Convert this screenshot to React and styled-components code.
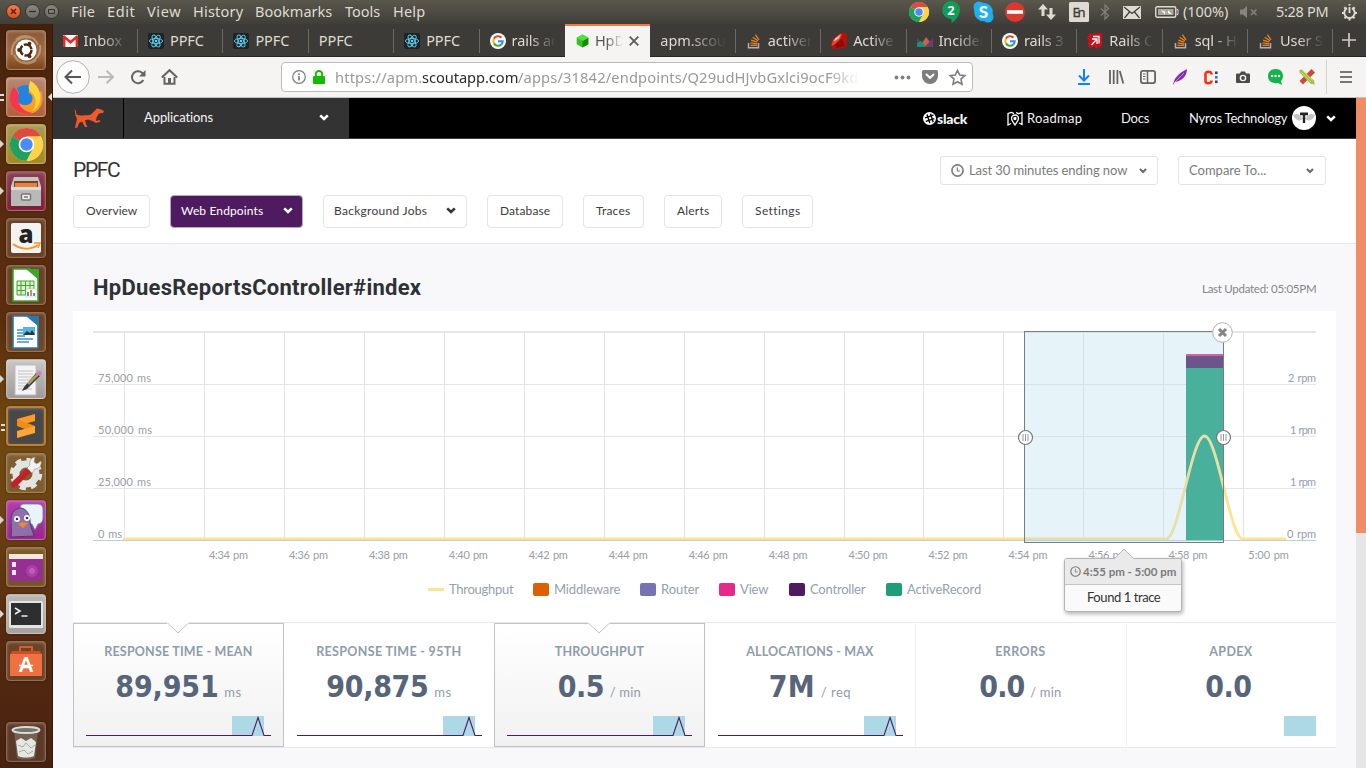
import React, { useLayoutEffect, useRef } from "react";
import styled, { createGlobalStyle } from "styled-components";

const Global = createGlobalStyle`
  * { box-sizing: border-box; }
  body { margin: 0; overflow: hidden; }
`;
const SYS = `"Noto Sans", "Open Sans", sans-serif`;
const WEB = `Lato, "Open Sans", sans-serif`;
const HEAD = `Roboto, "Open Sans", sans-serif`;

/* ---------- text that tracks itself to a given width ---------- */
const FitSpan = styled.span`
  display: block;
  flex: none;
  white-space: pre;
  width: ${(p) => p.$w}px;
  margin-left: ${(p) => p.$ml || 0}px;
  color: ${(p) => p.$c || "inherit"};
`;
function Fit({ w, ml, c, children }) {
  const ref = useRef(null);
  useLayoutEffect(() => {
    const el = ref.current;
    const range = document.createRange();
    el.style.letterSpacing = "0px";
    range.selectNodeContents(el);
    const natural = range.getBoundingClientRect().width;
    el.style.letterSpacing = (w + 0.3 - natural) / children.length + "px";
  }, [w, children]);
  return <FitSpan ref={ref} $w={w} $ml={ml} $c={c}>{children}</FitSpan>;
}

/* ---------- shell ---------- */
const Desktop = styled.div`
  width: 1366px; height: 768px; overflow: hidden;
  display: grid; grid-template-columns: 53px 1fr; grid-template-rows: 24px 1fr;
`;
const Icon = styled.svg`
  display: block; flex: none; overflow: visible;
  margin-left: ${(p) => p.$ml || 0}px;
`;
const MenuBar = styled.header`
  grid-column: 1 / 3;
  display: flex; align-items: center;
  background: linear-gradient(#5a574c, #3f3e39);
  color: #dfdbd2; font: 14.5px/22px ${SYS};
  & > span { padding-bottom: 2px; }
`;
const WinBtn = styled.b`
  width: 15px; height: 15px; border-radius: 50%; flex: none;
  margin-left: ${(p) => p.$ml}px; margin-top: -1px;
  background: ${(p) => (p.$close ? "linear-gradient(#f37b50,#e4501f)" : "linear-gradient(#8a877e,#6d6b64)")};
  border: 1px solid #37352f;
  display: grid; place-items: center;
`;

/* ---------- launcher ---------- */
const Launcher = styled.aside`
  background: linear-gradient(#42200c, #562a0e 12%, #5a2d0f 40%, #70480f 54%, #6c4412 65%, #552a10 82%, #482210);
  border-right: 1px solid #31180b;
  padding: 6px 0 0 6px;
  display: flex; flex-direction: column; gap: 7px;
`;
const Tile = styled.div`
  position: relative; flex: none;
  width: 40px; height: 40px; border-radius: 4px;
  background: ${(p) => p.$bg};
  border: ${(p) => (p.$edge ? `2px solid ${p.$edge}` : "1px solid rgba(255, 230, 200, 0.28)")};
  box-shadow: inset 0 1px 3px rgba(255,255,255,.25), 0 0 2px rgba(0,0,0,.5);
  margin-top: ${(p) => p.$mt || 0}px;
  display: grid; place-items: center;
`;
const Pip = styled.i`
  position: absolute; left: -7px; top: 15px;
  border: 4px solid transparent; border-left-color: #d9d5d0; border-right: 0;
`;
const Pips = styled.i`
  position: absolute; left: -7px; top: 16px; width: 4px; height: 7px;
  border-top: 2px solid #ddd; border-bottom: 2px solid #ddd;
`;
const ActivePip = styled.i`
  position: absolute; left: 41px; top: 15px;
  border: 4px solid transparent; border-right-color: #e4e0dc; border-left: 0;
`;

/* ---------- browser ---------- */
const Browser = styled.main`
  display: grid; grid-template-rows: 33px 41px 1fr; min-width: 0;
`;
const TabBar = styled.div`
  display: flex; background: #3c3b37; border-bottom: 1px solid #262521;
  color: #dfdbd2; font: 14.5px/33px ${SYS};
`;
const Tab = styled.div`
  position: relative; flex: none; width: 85.4px; height: 33px;
  margin-left: ${(p) => (p.$first ? -0.4 : 0)}px;
  padding-left: ${(p) => (p.$active ? 11 : 10)}px;
  padding-bottom: ${(p) => (p.$active ? 2 : 0)}px;
  display: flex; align-items: center; gap: 6px;
  background: ${(p) => (p.$active ? "#f5f4f2" : "none")};
  border-top: ${(p) => (p.$active ? "2px solid #f0794b" : "0")};
  color: ${(p) => (p.$active ? "#56544f" : "inherit")};
  &::after {
    content: ""; position: absolute; right: 0; top: 5px; width: 1px; height: 24px;
    background: ${(p) => (p.$plain ? "none" : "#6b6963")};
  }
`;
const TabText = styled.div`
  width: ${(p) => p.$w}px; overflow: hidden; white-space: nowrap;
  letter-spacing: -0.1px;
  mask-image: ${(p) => (p.$fade ? "linear-gradient(90deg,#000 40%,transparent)" : "none")};
`;
const ToolBar = styled.div`
  display: flex; align-items: center;
  background: #f5f4f3; border-bottom: 1px solid #c5c3c0; padding-left: 3px;
`;
const UrlBox = styled.div`
  width: 692px; height: 30px; margin-left: 103px; flex: none;
  display: flex; align-items: center;
  background: #fff; border: 1px solid #bdbbb8; border-radius: 4px;
  font: 14.7px/28px ${SYS};
`;
const Url = styled.div`
  display: flex; width: 524px; margin-left: 10px; overflow: hidden;
  mask-image: linear-gradient(90deg, #000 94%, transparent 100%);
`;
const Divider = styled.i`
  width: 1px; height: 34px; background: #d5d3d0; margin-left: 11px;
`;
const View = styled.div`
  display: grid; grid-template-columns: 1303px 10px; min-height: 0;
`;
const Track = styled.div`background: #e6e6e6;`;
const Thumb = styled.div`height: 435px; background: #f08d67;`;

/* ---------- page ---------- */
const Page = styled.div`background: #f8f8fb; font-family: ${WEB}; color: #333; min-width: 0;`;
const TopNav = styled.nav`
  display: flex; align-items: center; height: 41px;
  background: #000; border-bottom: 1px solid #3b3b3b;
  color: #f4f4f4; font-size: 13px; line-height: 39px;
`;
const Brand = styled.div`
  width: 70px; height: 40px; background: #333; display: grid; place-items: center;
`;
const AppPicker = styled.div`
  width: 225px; height: 40px; background: #333; margin-left: 1px;
  display: flex; align-items: center; padding: 0 0 1px 20px;
`;
const SlackName = styled.div`font-weight: 900; font-size: 14px;`;
const Avatar = styled.span`
  width: 24px; height: 24px; margin-left: 5px; border-radius: 50%; background: #fff; overflow: hidden;
  display: grid; place-items: center;
`;
const AppHead = styled.section`
  height: 105px; background: #fff; border-bottom: 1px solid #e7e7ea; padding: 17px 30px 0 20px;
`;
const HeadRow = styled.div`display: flex; height: 39px; align-items: flex-start;`;
const AppName = styled.h1`
  margin: 0; flex: 1; font: 400 21px/28px ${HEAD}; color: #333;
`;
const Select = styled.div`
  height: 29px; width: ${(p) => p.$w}px; margin-left: ${(p) => p.$ml || 0}px;
  border: 1px solid #e3e3e3; border-radius: 3px; padding: 0 10px;
  display: flex; align-items: center; color: #7b7b7b; font-size: 13px; line-height: 27px;
`;
const Buttons = styled.div`display: flex; gap: 20px;`;
const NavBtn = styled.div`
  height: 33px; width: ${(p) => p.$w}px; border-radius: 4px;
  margin-left: ${(p) => p.$ml || 0}px;
  border: 1px solid ${(p) => (p.$on ? "#b9a7c1" : "#e4e4e4")};
  background: ${(p) => (p.$on ? "#4f1b60" : "#fff")};
  color: ${(p) => (p.$on ? "#fff" : "#3b3b3b")};
  padding: 0 0 2px ${(p) => (p.$menu ? 10 : 12)}px;
  display: flex; align-items: center; font-size: 12px; line-height: 29px;
`;
const TitleRow = styled.div`
  display: flex; align-items: flex-start; height: 67px; padding: 28px 40px 0;
`;
const Title = styled.h2`margin: 0; flex: 1; font: 700 22px/31px ${HEAD}; color: #2f3235;`;
const Updated = styled.div`font-size: 11.5px; line-height: 34px; color: #858585;`;
const Panel = styled.div`position: relative; width: 1263px; margin-left: 20px; height: 437px; background: #fff; border-bottom: 1px solid #e8e8ee;`;
const ChartSvg = styled.svg`display: block; font: 11px ${WEB}; word-spacing: 1px;`;
const Legend = styled.div`
  display: flex; align-items: center; height: 20px; margin-top: 8px; padding-left: 355px;
  color: #95a0ae; font-size: 13px; line-height: 20px;
`;
const Swatch = styled.i`
  width: 16px; height: ${(p) => (p.$line ? 3 : 13)}px; border-radius: ${(p) => (p.$line ? 0 : 2)}px;
  background: ${(p) => p.$c}; margin: 0 5px 0 ${(p) => p.$ml || 0}px;
`;
const Tip = styled.div`
  position: absolute; left: 991px; top: 247px; width: 118px; height: 54px;
  border: 1px solid #b4b4b4; border-radius: 3px; background: #fafafa;
  box-shadow: 1px 2px 4px rgba(0,0,0,.3); color: #333; font-size: 13px; line-height: 25px;
`;
const TipHead = styled.div`
  display: flex; align-items: center; height: 26px; padding-left: 5px;
  background: #eaeaea; border-bottom: 1px solid #c6c6c6; border-radius: 2px 2px 0 0;
  color: #7b7b7b; font-weight: 700; font-size: 11.5px; line-height: 23px;
`;
const TipArrow = styled.svg`position: absolute; left: 48px; top: -11px;`;
const Stats = styled.div`
  display: grid; grid-template-columns: repeat(6, 1fr); height: 125px; margin-top: 23px;
  border-top: 1px solid #e8e8ee;
`;
const Card = styled.div`
  position: relative; height: 124px; min-width: 0;
  display: flex; flex-direction: column; align-items: center;
  border: 1px solid ${(p) => (p.$on ? "#c3c3c3" : "transparent")};
  border-left-color: ${(p) => (p.$on ? "#c3c3c3" : p.$div ? "#f0f0f4" : "transparent")};
  background: ${(p) => (p.$on ? "linear-gradient(#fff,#f1f1f1)" : "#fff")};
`;
const Notch = styled.svg`position: absolute; left: 93px; top: -2px;`;
const CardTitle = styled.div`
  margin-top: 18px; font-size: 12.5px; font-weight: 700; line-height: 20px; color: #8f9cab;
`;
const Value = styled.div`
  display: flex; align-items: baseline; height: 40px; margin-top: 5px;
  padding-right: ${(p) => p.$pr || 0}px;
  color: #56657a; font: 700 30px/40px "DejaVu Sans Condensed", "DejaVu Sans", sans-serif;
`;
const Unit = styled.div`font: 400 13px/20px ${WEB}; color: #8f9cab;`;
const Spark = styled.svg`position: absolute; left: 12px; top: 91px;`;

const Chevron = ({ c = "#fff", ml, s = 9 }) => (
  <Icon $ml={ml} width={s} height={s * 0.7} viewBox="0 0 10 7">
    <path d="M1.2 1.400 5 5 8.800 1.400" fill="none" stroke={c} strokeWidth="2.600" />
  </Icon>
);
const Clock = ({ s = 13, c = "#7b7b7b", w = 1.6 }) => (
  <Icon width={s} height={s} viewBox="0 0 13 13" fill="none" stroke={c} strokeWidth={w}>
    <circle cx="6.5" cy="6.5" r="5.6" /><path d="M6.3 3.3V7H9" strokeWidth={w * 0.75} />
  </Icon>
);

const Chrome = ({ s, ml }) => (
  <Icon $ml={ml} width={s} height={s} viewBox="0 0 32 32">
    <circle cx="16" cy="16" r="16" fill="#ddd" />
    <path d="M16 16 2.1 8A16 16 0 0 1 29.9 8z" fill="#dd4b3e" />
    <path d="M16 16 2.1 8A16 16 0 0 0 16 32L23 20z" fill="#1fa15d" />
    <path d="M16 16 22 20 16 32A16 16 0 0 0 29.9 8H16z" fill="#ffd24c" />
    <circle cx="16" cy="16" r="7.6" fill="#fff" /><circle cx="16" cy="16" r="6" fill="#4c8bf5" />
  </Icon>
);

/* ---------- tab favicons ---------- */
const Fav = {
  gmail: <Icon width="15" height="12" viewBox="0 0 15 12"><path fill="#f4f4f4" d="M0 0h15v12H0z" /><path fill="#d93025" d="M0 1 1 0l6.500 5.600L14 0l1 1v11h-2.400V4.500L7.500 9 2.400 4.500V12H0z" /></Icon>,
  react: <Icon width="16" height="16" viewBox="0 0 16 16"><rect width="16" height="16" rx="2" fill="#1f2226" /><g fill="none" stroke="#5ed3f3" strokeWidth=".9"><ellipse cx="8" cy="8" rx="6.600" ry="2.600" /><ellipse cx="8" cy="8" rx="6.600" ry="2.600" transform="rotate(60 8 8)" /><ellipse cx="8" cy="8" rx="6.600" ry="2.600" transform="rotate(120 8 8)" /></g><circle cx="8" cy="8" r="1.300" fill="#5ed3f3" /></Icon>,
  google: <Icon width="16" height="16" viewBox="0 0 16 16"><circle cx="8" cy="8" r="8" fill="#fff" /><g fill="none" strokeWidth="2.100"><path d="M11.500 4.700A4.700 4.700 0 0 0 3.900 5.800" stroke="#ea4335" /><path d="M3.900 5.800a4.700 4.700 0 0 0 0 4.400" stroke="#fbbc05" /><path d="M3.900 10.200a4.700 4.700 0 0 0 7.300 1.400" stroke="#34a853" /><path d="M11.200 11.600A4.700 4.700 0 0 0 12.700 8.200H8" stroke="#4285f4" /></g></Icon>,
  hex: <Icon width="13" height="14" viewBox="0 0 13 14"><path fill="#2fc51b" d="M6.500.5 12.300 3.800V10.200L6.500 13.500.7 10.200V3.800z" /><path fill="#178a0c" d="M12.300 3.800V10.200L6.500 13.500V7z" /><path fill="#56dd3e" d="M6.500.5 12.300 3.800 6.500 7 .7 3.800z" /></Icon>,
  so: <Icon width="16" height="16" viewBox="0 0 16 16" fill="none"><path d="M2.500 10v4.800h10V10" stroke="#aeb1b5" strokeWidth="1.500" /><path d="M4.500 12.400h6.500M4.600 9.900l6.400.9M5.200 7.200l6.100 1.900M6.700 4.300l5.300 3.500M9.300 1.700l3.700 5.100" stroke="#ee7f22" strokeWidth="1.350" /></Icon>,
  ruby: <Icon width="16" height="16" viewBox="0 0 16 16"><path fill="#b81208" d="M9 0h5.500L16 2l-.5 11-3 2.500-10 .5L0 13l.5-5z" /><path fill="#e8483a" d="M9 1 2 7l-1.500 6 3.500-2 5-5 2-5z" /><path fill="#fff" opacity=".7" d="M9.500 1.500 4 5.500l-1 3L8 5z" /><path fill="#8f0a04" d="m4 12 7-6 3 7-9 2z" /></Icon>,
  incident: <Icon width="16" height="12" viewBox="0 0 16 12"><path fill="#245c6e" d="M0 3 4 7v5H0z" /><path fill="#c4653a" d="m5 8 4-6 4 5-5 5z" /><path fill="#1f8e80" d="M0 12V8l4-2 5 6z" /><path fill="#6c3a80" d="m8 12 8-9v9z" /></Icon>,
  rails: <Icon width="16" height="16" viewBox="0 0 16 16"><path fill="#c9101b" d="M2 1 15 0v13l-3 1-2 2-3-2-5 1L1 11l1-3-2-3z" /><path d="M5 6h5v5M4.500 12l5-5.500M6 3.500h6v7" fill="none" stroke="#fff" strokeWidth="1.300" /></Icon>,
};
const TABS = [
  ["gmail", "Inbox -", 1], ["react", "PPFC"], ["react", "PPFC"], [null, "PPFC"], ["react", "PPFC"],
  ["google", "rails ac", 1], ["hex", "HpD", 1], [null, "apm.scou", 1], ["so", "activer", 1], ["ruby", "Active", 1],
  ["incident", "Inciden", 1], ["google", "rails 3 s", 1], ["rails", "Rails C", 1], ["so", "sql - Ho", 1], ["so", "User Se", 1],
];

/* ---------- launcher artwork ---------- */
const art = (body) => <Icon width="34" height="34" viewBox="0 0 34 34">{body}</Icon>;
const doc = (c, body) => art(<><path d="M4 1h17l8 9v23H4z" fill="#fff" stroke={c} strokeWidth="1.600" /><path d="M17 1h13v11z" fill={c} />{body}</>);
const TILES = [
  { bg: "linear-gradient(#8a5a38,#a06a43 60%,#7d4518)", art: art(<><path d="M3 22C1 9 12 2 21 5M31 12c2 12-8 20-18 17M7 7c7-7 19-4 22 5M27 27c-7 6-18 4-22-5" stroke="#dcc3ad" opacity=".5" strokeWidth="2" fill="none" /><circle cx="17" cy="17" r="10.500" fill="#fff" /><circle cx="17" cy="17" r="5.500" fill="none" stroke="#532a10" strokeWidth="2.500" strokeDasharray="10 1.500" /><circle cx="10" cy="17" r="1.900" fill="#532a10" /><circle cx="20.500" cy="10.700" r="1.900" fill="#532a10" /><circle cx="20.500" cy="23.300" r="1.900" fill="#532a10" /></>) },
  { bg: "linear-gradient(#b58873,#b0603a)", pips: 1, active: 1, art: art(<><circle cx="17" cy="18" r="13" fill="#2583e0" /><path d="M4 7C-1 15 0 25 6 30c7 6 18 5 23 0 6-6 5-15 3-20-1 3-2 4-3 4 1-5-2-11-8-13 2 5-2 8-1 12 6 3 4 11-2 12-7 1-12-4-11-10l3-1-2-5-4 1z" fill="#ff9a24" /><path d="M4 7C-1 15 0 25 6 30c5 4 12 5 18 3-9-1-17-8-14-18l-2-5z" fill="#f3384d" /><path d="M21 1c7 3 12 11 10 20-1 6-5 9-8 10 6-8 4-15-2-20-3-4 0-7 0-10z" fill="#ffd43a" /></>) },
  { bg: "linear-gradient(#a69a55,#a58a21)", pip: 1, art: <Chrome s={33} /> },
  { bg: "linear-gradient(#8c4054,#7d1c34)", pip: 1, art: art(<><path d="M5 3h24l3 9v20H2V12z" fill="#c4c4c4" /><path d="M5 7h24v6H5z" fill="#744225" /><path d="M6 9h22v5H6z" fill="#e7833a" /><path d="M2 13h30v19H2z" fill="#b9b9b9" /><path d="M2 13h30v3H2z" fill="#dadada" /><rect x="12.500" y="20" width="9" height="6" rx="1" fill="#eee" stroke="#777" strokeWidth="1.500" /><path d="M15 23h4" stroke="#777" strokeWidth="1.500" /></>) },
  { bg: "rgba(255,255,255,.10)", art: art(<><rect x="2" y="2" width="30" height="30" rx="2" fill="#f3f3f3" /><text x="17" y="22" textAnchor="middle" fontFamily="Open Sans, sans-serif" fontWeight="800" fontSize="25" textLength="15" lengthAdjust="spacingAndGlyphs" fill="#222">a</text><path d="M4 23c8 6 18 6 25 1" stroke="#f59a1b" strokeWidth="2" fill="none" /><path d="m25 22 6 0-2 5" stroke="#f59a1b" strokeWidth="1.500" fill="none" /></>) },
  { bg: "rgba(255,255,255,.10)", art: doc("#3ea52c", <><path d="M8 13h17v14H8z" fill="#d9f2ce" /><path d="M8 13h17v14H8zM8 17.500h17M8 22.500h17M12 13v14M16.500 13v14M21 13v14" stroke="#44a52c" fill="none" /><rect x="17" y="21" width="10" height="8" fill="#fff" stroke="#bbb" strokeWidth=".5" /><path d="M19 28v-4" stroke="#3f98d8" strokeWidth="2" /><path d="M22 28v-6" stroke="#eb8537" strokeWidth="2" /><path d="M25 28v-3" stroke="#3f98d8" strokeWidth="2" /></>) },
  { bg: "rgba(255,255,255,.10)", art: doc("#2a78b0", <><path d="M8 15h8M8 18h8M8 21h8M8 24h16M8 27h12" stroke="#3f92cd" strokeWidth="1.700" /><path d="M14 12h12v8H14z" fill="#58b4e8" /><path d="m14 20 4-4 3 2 2-3 3 5z" fill="#253f2c" /></>) },
  { bg: "linear-gradient(#c9c6c4,#9e9a97)", pip: 1, art: art(<><path d="M6 3h21v30H6z" fill="#f4f4f4" stroke="#bbb" /><path d="M9 9h15M9 12h15M9 15h15M9 18h12M9 21h10M9 24h12M9 27h14" stroke="#c2c2c2" /><path d="m15 25 12-14 4 3-13 13-5 2z" fill="#3a3a3a" /><path d="m18 21 10-10 2 2-10 10z" fill="#d8cb62" opacity=".7" /><path d="m27 11 3-3 3 3-2 3z" fill="#d77cc0" /></>) },
  { bg: "#484848", edge: "#bf7f35", pips: 1, art: art(<><path d="M8 10 26 5v7L8 17z" fill="#ff9a28" /><path d="m8 10 18 7v7L8 17z" fill="#f08c18" /><path d="m8 22 18-5v7L8 29z" fill="#ffa436" /></>) },
  { bg: "rgba(255,255,255,.13)", art: art(<><circle cx="17" cy="18" r="10" fill="none" stroke="#e3e3e1" strokeWidth="7" /><circle cx="17" cy="18" r="14" fill="none" stroke="#e3e3e1" strokeWidth="4.500" strokeDasharray="6 5" /><path d="M3 31c-2-2-1-4 1-6L19 11l4 4L8 30c-2 2-4 2-5 1z" fill="#c5202a" /><path d="m18 12 3-3c-1-4 1-7 5-8l-1 5 3 2 4-3c1 4-2 8-6 8l-3 4z" fill="#f2f2f2" stroke="#999" strokeWidth=".7" /></>) },
  { bg: "linear-gradient(#b53faa,#9a2490)", pip: 1, art: art(<><path d="M15 1h13c4 0 6 2 6 6v8c0 3-2 6-5 6l-3 6-3-6h-6c-4 0-6-2-6-6V7c0-4 1-6 4-6z" fill="#e8f3fa" stroke="#5985b6" strokeWidth=".8" /><path d="M2 34c1-7 0-12 0-17C2 9 7 5 12 5c6 1 9 7 9 13 0 6 3 10 4 15z" fill="#9070aa" stroke="#543a70" /><circle cx="8" cy="16" r="3" fill="#fff" /><circle cx="18" cy="15" r="3" fill="#fff" /><circle cx="8" cy="16" r="1.300" fill="#333" /><circle cx="18" cy="15" r="1.300" fill="#333" /><path d="m9 21 4-2 6 1-5 5z" fill="#e88c28" /></>) },
  { bg: "rgba(255,240,180,.16)", art: art(<><rect x="0" y="4" width="34" height="27" rx="1.500" fill="#952f91" /><rect x="0" y="4" width="34" height="5" fill="#eee9d4" /><circle cx="23" cy="21" r="6" fill="#c45dbc" opacity=".4" /><circle cx="23" cy="21" r="3" fill="#d27ccb" opacity=".5" /><path d="M3 12h4v5H3zM3 20h4v5H3z" fill="#efe6f0" /></>) },
  { bg: "linear-gradient(#b9b7b4,#a4a19e)", pip: 1, art: art(<><rect x="0" y="4" width="34" height="27" rx="1.500" fill="#e4e4e2" /><rect x="2" y="6" width="30" height="22" fill="#2c2e2f" /><path d="m6 11 5 3-5 3M12.500 19h6" stroke="#eee" strokeWidth="1.600" fill="none" /></>) },
  { bg: "rgba(255,230,180,.14)", art: art(<><path d="M11 9V3h12v6" fill="none" stroke="#d85a2e" strokeWidth="2" /><path d="M3 7h28l2 4H1z" fill="#ca4f27" /><path d="M1 10h32v22H1z" fill="#ef7040" /><text x="17" y="28" textAnchor="middle" fontFamily="Lato, sans-serif" fontWeight="900" fontSize="20" fill="#fff">A</text><path d="M10 21.500h14" stroke="#fff" strokeWidth="1.500" /></>) },
  { bg: "rgba(255,255,255,.10)", mt: 34, art: art(<><path d="m5 5 3 28c5 2 13 2 18 0l3-28z" fill="#858178" opacity=".55" /><path d="m7 16 5-3 5 3 5-3 5 4-2 14c-5 2-11 2-16 0z" fill="#e6e6e3" /><path d="m9 20 5 2 3-4 5 5 4-3M10 27l5-2 4 4 5-3" stroke="#aaa" fill="none" /><ellipse cx="17" cy="5" rx="13.500" ry="3" fill="#75736e" stroke="#dcdcd9" strokeWidth="1.800" /></>) },
];

const G = "#dfdbd2";
const N = "#646464";
const Tray = () => (
  <>
    <Chrome s={20} ml={484} />
    <Icon $ml={13} width="18" height="22" viewBox="0 0 18 22"><path fill="#109d59" d="M9 0a9 9 0 0 1 9 9c0 5-4 10-8.500 13v-4A9 9 0 0 1 9 0z" /><text x="9" y="14" textAnchor="middle" fill="#fff" fontSize="13" fontWeight="700" fontFamily="Noto Sans">2</text></Icon>
    <Icon $ml={13} width="21" height="22" viewBox="0 0 21 22"><g fill="#1fb0f0"><circle cx="10.500" cy="11" r="9.300" /><circle cx="6" cy="6" r="5.500" /><circle cx="15" cy="16" r="5.500" /></g><text x="10.500" y="17" textAnchor="middle" fill="#fff" fontSize="17" fontWeight="900" fontFamily="Lato">S</text></Icon>
    <Icon $ml={11} width="20" height="20" viewBox="0 0 20 20"><circle cx="10" cy="10" r="10" fill="#d9392f" /><path d="M2 8.200h16v3.600H2z" fill="#fff" /></Icon>
    <Icon $ml={13} width="18" height="16" viewBox="0 0 18 16" fill={G}><path d="M5 0 0 5.500h3.500V12h3V5.500H10zM13 16l5-5.500h-3.500V4h-3v6.500H8z" /></Icon>
    <Icon $ml={13} width="20" height="20" viewBox="0 0 20 20"><rect width="20" height="20" rx="1.500" fill={G} /><text x="3.500" y="15.300" fontSize="13" fill="#3c3b37" stroke="#3c3b37" strokeWidth=".3" fontFamily="Noto Sans" textLength="13">En</text></Icon>
    <Icon $ml={11} width="10" height="16" viewBox="0 0 10 16" fill="none" stroke="#85827b" strokeWidth="1.200"><path d="m1 4.500 7.500 7L5 15V1l3.500 3.500-7.500 7" /></Icon>
    <Icon $ml={13} width="18" height="13" viewBox="0 0 18 13"><path fill={G} d="M0 0h18v13H0z" /><path d="m1 1 8 6.500L17 1M1.500 12l5-6M16.500 12l-5-6" stroke="#3c3b37" strokeWidth="1.200" fill="none" /></Icon>
    <Icon $ml={14} width="24" height="12" viewBox="0 0 24 12"><rect x=".75" y=".75" width="20" height="10.500" rx="1.500" stroke={G} strokeWidth="1.400" fill="none" /><path d="M3 3h15.500v6H3z" fill="#aaa79f" /><path d="M21.500 3.500H23v5h-1.500" stroke={G} fill="none" /><path d="m6 4 7 3V4l4 4.500-7-2.500v2.500z" fill="#fff" /></Icon>
    <Fit ml={4} w={45}>(100%)</Fit>
    <Icon $ml={12} width="18" height="12" viewBox="0 0 18 12" fill="#88857e"><path d="M0 3.500h3L7 0v12L3 8.500H0z" /><path d="m11 3.500 5.500 5.500m0-5.500L11 9" stroke="#88857e" strokeWidth="1.500" /></Icon>
    <Fit ml={18} w={52}>5:28 PM</Fit>
    <Icon $ml={13} width="17" height="17" viewBox="0 0 17 17" fill="none" stroke={G}><path d="M6 4.200a5.200 5.200 0 1 0 5 0M8.500 3v6" strokeWidth="1.900" /><path d="m3.300 3.300 1.500 1.500M13.700 3.300l-1.500 1.500M1 9h2M14 9h2M3.500 14.200 5 12.700M13.500 14.200 12 12.700M8.500 14.500v2M8.500 0v1.500" strokeWidth="2" /></Icon>
  </>
);

const ToolIcons = () => (
  <>
    <Icon $ml={104} width="14" height="16" viewBox="0 0 14 16" fill="none" stroke="#0a84ff" strokeWidth="2"><path d="M7 0v11M2 6.500l5 5 5-5M1 15h12" /></Icon>
    <Icon $ml={18} width="15" height="14" viewBox="0 0 15 14" fill="none" stroke={N} strokeWidth="1.800"><path d="M1 0v14M4.700 0v14M8.400 0v14M10.800 1l3.500 12.500" /></Icon>
    <Icon $ml={16} width="16" height="14" viewBox="0 0 16 14" fill="none" stroke={N}><rect x=".9" y=".9" width="14.200" height="12.200" rx="2" strokeWidth="1.800" /><path d="M7.500 1v12" strokeWidth="1.500" /><path d="M3 4h2.500M3 6.500h2.500M3 9h2.500" strokeWidth="1" /></Icon>
    <Icon $ml={17} width="15" height="16" viewBox="0 0 15 16"><path d="M0 16C1 10 4 5 14 0c0 7-5 12-12 13z" fill="#8a2ab0" /><path d="M1 14 11 4" stroke="#d9a0ea" strokeWidth=".8" /></Icon>
    <Icon $ml={16} width="14" height="15" viewBox="0 0 14 15"><path d="M7.500 4.500V4C7.500 1 1.500 1 1.500 4v7c0 3 6 3 6 0v-.5" stroke="#ff2f0a" strokeWidth="2.600" fill="none" /><g fill="#35456a"><rect x="11" y="1.500" width="2.600" height="2.600" /><rect x="11" y="6" width="2.600" height="2.600" fill="#2c78e4" /><rect x="11" y="10.500" width="2.600" height="2.600" /></g></Icon>
    <Icon $ml={18} width="14" height="12" viewBox="0 0 14 12"><path d="M1 2.500h3L5 .5h4l1 2h3q1 0 1 1V11q0 1-1 1H1q-1 0-1-1V3.500q0-1 1-1z" fill="#4a4a4a" /><circle cx="7" cy="7" r="3.300" fill="#f4f4f4" /><circle cx="7" cy="7" r="1.900" fill="#4a4a4a" /></Icon>
    <Icon $ml={18} width="15" height="16" viewBox="0 0 15 16"><path fill="#12b347" d="M7.500 0C13 0 15 3.500 15 7c0 2-1 4-2 5l1 4-4-2C4 15 0 12 0 7c0-4 3-7 7.500-7z" /><g fill="#fff"><circle cx="4" cy="7" r="1.200" /><circle cx="7.500" cy="7" r="1.200" /><circle cx="11" cy="7" r="1.200" /></g></Icon>
    <Icon $ml={16} width="16" height="16" viewBox="0 0 16 16"><path d="m12.500 0 3.500 3.500L4 15.500.5 12z" fill="#cf4a35" /><path d="M.5 1 3 .5 15 11.500l.7 4-4-.7L.5 3.500z" fill="#a4bd45" /><path d="m2 3 10 10M3.500 1.500l10 10" stroke="#cfdd7e" strokeWidth=".9" /></Icon>
    <Divider />
    <Icon $ml={13} width="12" height="12" viewBox="0 0 12 12" stroke="#4c4c4c" strokeWidth="1.700"><path d="M0 1h12M0 6h12M0 11h12" /></Icon>
  </>
);

const vx = (i) => 51.45 + i * 79.95;
const HOURS = ["4:34", "4:36", "4:38", "4:40", "4:42", "4:44", "4:46", "4:48", "4:50", "4:52", "4:54", "4:56", "4:58", "5:00"];
const Chart = () => (
  <ChartSvg width="1263" height="260" viewBox="0 0 1263 260">
    <g stroke="#e6e6e6" strokeWidth="1" shapeRendering="crispEdges">
      {Array.from({ length: 15 }, (_, i) => <line key={i} x1={Math.floor(vx(i)) + 0.5} x2={Math.floor(vx(i)) + 0.5} y1="21" y2="229" />)}
      {[73.5, 125.5, 177.5].map((y) => <line key={y} x1="20" x2="1243" y1={y} y2={y} />)}
      <line x1="20" x2="1243" y1="21" y2="21" strokeWidth="2" />
    </g>
    <g fill="#989da5">
      {["75,000 ms", "50,000 ms", "25,000 ms", "0 ms"].map((t, i) => <text key={t} x="25" y={71 + i * 52} textLength={[53, 54, 53, 24][i]}>{t}</text>)}
      {["2 rpm", "1 rpm", "1 rpm", "0 rpm"].map((t, i) => <text key={i} x={1243 - [28, 26, 26, 29][i]} y={71 + i * 52} textLength={[28, 26, 26, 29][i]} fill="#949db2">{t}</text>)}
      {HOURS.map((t, i) => <text key={t} x={vx(i + 1) + 4.6} y="248" textLength={i === 13 ? 40.5 : 39}>{t} pm</text>)}
    </g>
    <rect x="1113" y="57" width="37" height="172.500" fill="#1b9e77" />
    <rect x="1113" y="45" width="37" height="12" fill="#4f1b60" />
    <rect x="1113" y="43" width="37" height="2" fill="#e7298a" />
    <path d="M50 228H1093C1105.800 228 1118.600 125 1131.500 125S1157 228 1170 228H1213" fill="none" stroke="#ffe28c" strokeWidth="2.800" />
    <path d="M20 229.500H1113M1150 229.500H1243" stroke="#bccfde" />
    <rect x="951.500" y="20.500" width="199" height="211" fill="rgba(173,216,235,.31)" stroke="#797d80" />
    {[952.5, 1150.5].map((x) => (
      <g key={x}>
        <circle cx={x} cy="126.500" r="7" fill="#fff" stroke="#777" strokeWidth="1.200" />
        <path d={`M${x - 2.5} 123v7M${x} 123v7M${x + 2.5} 123v7`} stroke="#999" strokeWidth="1" />
      </g>
    ))}
    <circle cx="1149.500" cy="21.500" r="9.800" fill="#fff" stroke="#b0b0b0" />
    <path d="m1146 18 7 7m0-7-7 7" stroke="#858585" strokeWidth="3" />
  </ChartSvg>
);

const LEGEND = [
  ["Throughput", "#ffe28c", 64, 0], ["Middleware", "#dc5f04", 66, 20], ["Router", "#7872b4", 38, 20],
  ["View", "#e7298a", 28, 20], ["Controller", "#4f1b60", 55, 21], ["ActiveRecord", "#1d9d78", 74, 21],
];
const STATS = [
  ["RESPONSE TIME - MEAN", 148, "89,951", 103, "ms", 17, 1, 1, 1],
  ["RESPONSE TIME - 95TH", 145, "90,875", 102, "ms", 17, 0, 1, 1],
  ["THROUGHPUT", 89, "0.5", 46, "/ min", 31, 1, 1, 1],
  ["ALLOCATIONS - MAX", 127, "7M", 46, "/ req", 30, 0, 1, 1],
  ["ERRORS", 50, "0.0", 45, "/ min", 31, 0, 0, 0],
  ["APDEX", 43, "0.0", 46, null, 0, 0, 1, 0],
];

export default function App() {
  return (
    <Desktop>
      <Global />
      <MenuBar>
        <WinBtn $ml={6} $close><Icon width="7" height="7" viewBox="0 0 7 7" stroke="#4a2110" strokeWidth="1.300"><path d="m1 1 5 5m0-5L1 6" /></Icon></WinBtn>
        <WinBtn $ml={4}><Icon width="7" height="7" viewBox="0 0 7 7" stroke="#33312c" strokeWidth="1.300"><path d="M0 3.500h7" /></Icon></WinBtn>
        <WinBtn $ml={4}><Icon width="7" height="5" viewBox="0 0 7 5" stroke="#33312c" fill="none"><path d="M.5.5h6v4h-6z" /></Icon></WinBtn>
        <Fit ml={12} w={24}>File</Fit><Fit ml={12} w={28}>Edit</Fit><Fit ml={12} w={34}>View</Fit><Fit ml={12} w={50}>History</Fit>
        <Fit ml={12} w={77}>Bookmarks</Fit><Fit ml={13} w={35}>Tools</Fit><Fit ml={13} w={32}>Help</Fit>
        <Tray />
      </MenuBar>
      <Launcher>
        {TILES.map((t, i) => (
          <Tile key={i} $bg={t.bg} $mt={t.mt} $edge={t.edge}>
            {t.art}{t.pip && <Pip />}{t.pips && <Pips />}{t.active && <ActivePip />}
          </Tile>
        ))}
      </Launcher>
      <Browser>
        <TabBar>
          {TABS.map(([f, t, fade], i) => (
            <Tab key={i} $first={i === 0} $active={i === 6} $plain={i === 5 || i === 6}>
              {f && Fav[f]}
              <TabText $fade={fade} $w={i === 6 ? 28 : f ? 44 : 66}>{t}</TabText>
              {i === 6 && <Icon width="10" height="10" viewBox="0 0 10 10" stroke="#5a5955" strokeWidth="1.800"><path d="m.7.7 8.600 8.600m0-8.600L.7 9.300" /></Icon>}
            </Tab>
          ))}
          <Icon $ml={9} width="14" height="32" viewBox="0 0 14 32" stroke="#cfccc5" strokeWidth="1.700"><path d="M7 9v14M0 16h14" /></Icon>
        </TabBar>
        <ToolBar>
          <Icon width="34" height="34" viewBox="0 0 34 34" fill="none"><circle cx="17" cy="17" r="16.300" fill="#fcfcfc" stroke="#b4b2b0" /><path d="M25 17H10m6-6.500L9.500 17l6.500 6.500" stroke="#585858" strokeWidth="2" /></Icon>
          <Icon $ml={8} width="16" height="14" viewBox="0 0 16 14" fill="none" stroke="#bab9b8" strokeWidth="2"><path d="M0 7h15M8.500.8 15 7l-6.500 6.200" /></Icon>
          <Icon $ml={16} width="16" height="16" viewBox="0 0 16 16" fill="none"><path d="M13.300 11A6 6 0 1 1 12 3.700l2 2" stroke={N} strokeWidth="2" /><path d="M15.500 1v6.500H9z" fill={N} /></Icon>
          <Icon $ml={15} width="17" height="16" viewBox="0 0 17 16" fill="none"><path d="M.8 8.500 8.500 1.200l7.700 7.300" stroke={N} strokeWidth="2" /><path d="M3.500 8v6.800h10V8" stroke={N} strokeWidth="2" /><path d="M7 9h3v6H7z" fill={N} /></Icon>
          <UrlBox>
            <Icon $ml={10} width="14" height="14" viewBox="0 0 14 14" fill="none" stroke="#7c7c7c"><circle cx="7" cy="7" r="6.300" strokeWidth="1.200" /><path d="M7 6v4.500M7 3.300V5" strokeWidth="1.700" /></Icon>
            <Icon $ml={7} width="12" height="14" viewBox="0 0 12 14"><path d="M2.800 7V4.200a3.200 3.200 0 0 1 6.400 0V7" stroke="#12bc00" strokeWidth="2" fill="none" /><rect y="6" width="12" height="8" rx="1" fill="#12bc00" /></Icon>
            <Url>
              <Fit w={87} c="#999">https://apm.</Fit><Fit w={96} c="#2b2b2b">scoutapp.com</Fit><Fit w={340} c="#999">/apps/31842/endpoints/Q29udHJvbGxlci9ocF9kd</Fit>
            </Url>
            <Icon $ml={35} width="17" height="5" viewBox="0 0 17 5" fill="#808080"><circle cx="2.500" cy="2.500" r="1.900" /><circle cx="8.500" cy="2.500" r="1.900" /><circle cx="14.500" cy="2.500" r="1.900" /></Icon>
            <Icon $ml={11} width="16" height="14" viewBox="0 0 16 14"><path d="M1.500 0h13Q16 0 16 1.500V6a8 8 0 0 1-16 0V1.500Q0 0 1.500 0z" fill="#7d7d7d" /><path d="m4.500 4.500 3.500 3.300 3.500-3.300" stroke="#fff" strokeWidth="2" fill="none" strokeLinecap="round" /></Icon>
            <Icon $ml={11} width="17" height="16" viewBox="0 0 17 16"><path d="m8.500 1.300 2.200 4.700 5.100.6-3.800 3.500 1 5.100-4.500-2.500L4 15.200l1-5.100L1.200 6.600 6.300 6z" fill="none" stroke="#7d7d7d" strokeWidth="1.600" /></Icon>
          </UrlBox>
          <ToolIcons />
        </ToolBar>
        <View>
          <Page>
            <TopNav>
              <Brand><Icon width="31" height="21" viewBox="0 0 31 21"><path fill="#f0592b" d="M1.500 1c1.500 1 1.500 3 2 5.500C7 8 14 7.500 18 6.500L22.500 2l1-1.500L27 1l4 2-1 2-4 .5-2.500 4-.5 3.500 3.500-1 1 1.500-4.500 1.500-3.500-2-4.500-1.500-3 1 1 3.500 1.500 3H12l-3-5.500-3 1.500-1.500 4.500-2.500.5L3 15l1-4L2.500 7.500z" /></Icon></Brand>
              <AppPicker><Fit w={69}>Applications</Fit><Chevron ml={105.5} s={10} /></AppPicker>
              <Icon $ml={573} width="15" height="15" viewBox="0 0 15 15"><circle cx="7.500" cy="7.500" r="6.500" fill="#fff" /><path d="m5 3.500 2.800 8.500M8.500 2.800l2.700 8.500M3 6.800l8.500-2.700M3.800 10.300l8.500-2.700" stroke="#000" strokeWidth="1.400" /></Icon>
              <SlackName><Fit w={30}>slack</Fit></SlackName>
              <Icon $ml={40} width="16" height="15" viewBox="0 0 16 15" fill="none" stroke="#fff" strokeWidth="1.300"><path d="M4 12.500 1 14V2.500l3.500-1L7 2.700M12 12l3 1.500V1.500L11.500 2.700 9 1.500" /><path d="M8 14C6.500 11.500 4.500 9.500 4.500 7.500a3.500 3.500 0 0 1 7 0C11.500 9.500 9.500 11.500 8 14z" /><circle cx="8" cy="7.500" r="1" fill="#fff" /></Icon>
              <Fit ml={4} w={55}>Roadmap</Fit>
              <Fit ml={39} w={28}>Docs</Fit>
              <Fit ml={40} w={98}>Nyros Technology</Fit>
              <Avatar><Icon width="24" height="24" viewBox="0 0 24 24"><path d="M1 9c4-2 7-1 10 4-4 3-8 1-10-4zM23 9c-4-2-7-1-10 4 4 3 8 1 10-4z" fill="#c5c5c5" /><path d="M8 6.500h8v2.800h-2.800V17h-2.400V9.300H8z" fill="#222" /></Icon></Avatar>
              <Chevron ml={9.5} s={10} />
            </TopNav>
            <AppHead>
              <HeadRow>
                <AppName><Fit w={46}>PPFC</Fit></AppName>
                <Select $w={218}><Clock /><Fit ml={5} w={158}>Last 30 minutes ending now</Fit><Chevron ml={12} c="#6b6b6b" s={8} /></Select>
                <Select $w={148} $ml={20}><Fit w={77}>Compare To...</Fit><Chevron ml={40} c="#6b6b6b" s={8} /></Select>
              </HeadRow>
              <Buttons>
                <NavBtn $w={77}><Fit w={51}>Overview</Fit></NavBtn>
                <NavBtn $w={133} $menu $on><Fit w={82}>Web Endpoints</Fit><Chevron ml={20} s={10} /></NavBtn>
                <NavBtn $w={144} $menu><Fit w={93}>Background Jobs</Fit><Chevron ml={19} c="#333" s={10} /></NavBtn>
                <NavBtn $w={76}><Fit w={50}>Database</Fit></NavBtn>
                <NavBtn $w={61}><Fit w={34}>Traces</Fit></NavBtn>
                <NavBtn $w={58}><Fit w={32}>Alerts</Fit></NavBtn>
                <NavBtn $w={71}><Fit w={45}>Settings</Fit></NavBtn>
              </Buttons>
            </AppHead>
            <TitleRow>
              <Title><Fit w={328}>HpDuesReportsController#index</Fit></Title>
              <Updated><Fit w={114}>Last Updated: 05:05PM</Fit></Updated>
            </TitleRow>
            <Panel>
              <Chart />
              <Legend>
                {LEGEND.map(([t, c, w, ml], i) => <React.Fragment key={t}><Swatch $c={c} $ml={ml} $line={i === 0} /><Fit w={w}>{t}</Fit></React.Fragment>)}
              </Legend>
              <Stats>
                {STATS.map(([t, tw, v, vw, u, uw, on, box, line], i) => (
                  <Card key={t} $on={on} $div={i > 3}>
                    {on === 1 && <Notch width="22" height="13" viewBox="0 0 22 13"><path d="M0 0h22v1.500L11 11 0 1.500z" fill="#fff" /><path d="M.5 1 11 11 21.500 1" fill="none" stroke="#c3c3c3" /></Notch>}
                    <CardTitle><Fit w={tw}>{t}</Fit></CardTitle>
                    <Value $pr={u ? 0 : 5}><Fit w={vw}>{v}</Fit>{u && <Unit><Fit ml={6} w={uw}>{u}</Fit></Unit>}</Value>
                    <Spark width="196" height="24" viewBox="0 0 196 24">
                      {box === 1 && <rect x={i === 5 ? 145 : 146} y="1" width="32" height="20" fill="#add8e6" />}
                      {line === 1 && <path d="M0 20.500H166L172 2.500 178 20.500H185" fill="none" stroke="#4f1b60" strokeWidth="1.100" />}
                    </Spark>
                  </Card>
                ))}
              </Stats>
              <Tip>
                <TipArrow width="22" height="12" viewBox="0 0 22 12"><path d="M1 11.500 11 1l10 10.500z" fill="#eaeaea" /><path d="M1 11 11 1l10 10" fill="none" stroke="#b9b9b9" /></TipArrow>
                <TipHead><Clock s={11} w={1.4} /><Fit ml={2} w={93}>4:55 pm - 5:00 pm</Fit></TipHead>
                <Fit ml={22} w={73}>Found 1 trace</Fit>
              </Tip>
            </Panel>
          </Page>
          <Track><Thumb /></Track>
        </View>
      </Browser>
    </Desktop>
  );
}
